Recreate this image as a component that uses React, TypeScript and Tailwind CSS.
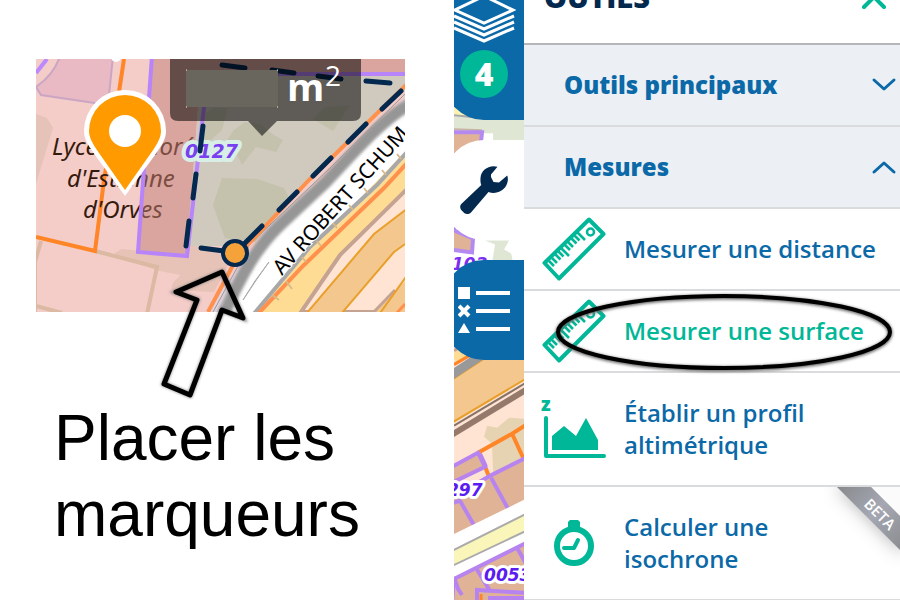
import React from "react";

const MAP_LABEL = "font-['DejaVu_Sans',sans-serif] font-bold italic";

function ParcelMap() {
  return (
    <svg viewBox="36 59 369 341" className="block w-[369px] max-w-full" role="img" aria-label="Carte">
      <defs>
        <clipPath id="mapFrame">
          <rect x="36" y="59" width="369" height="253" />
        </clipPath>
        <filter id="soft" x="-20%" y="-20%" width="140%" height="140%">
          <feGaussianBlur stdDeviation="1.5" />
        </filter>
      </defs>
      <g clipPath="url(#mapFrame)">
        <rect x="36" y="59" width="369" height="253" fill="#f4ccc8" />
        <path d="M60 56H113L108 105 88 102 41 95 36 87C46 80 56 69 60 56Z" fill="#e9bac3" stroke="#cba6c4" strokeWidth="2" />
        <path d="M36 73 47 59" stroke="#bb88ff" strokeWidth="4" />
        <path d="M36 114 47 118 53 128 36 184Z" fill="#e6c3b8" />
        <path d="M115 253 122 249 187 256 188 244 236 250 214 292 172 290C170 281 179 279 180 275L160 271 115 257Z" fill="#e7c3b7" />
        <path d="M41 241 35 262V314M95 251 157 267 147 314M36 306 62 313" fill="none" stroke="#dbb9a2" strokeWidth="4" />
        <path d="M124 59 119 92 104 180 95 251 36 237" fill="none" stroke="#ff8526" strokeWidth="4" />
        <circle cx="116" cy="57" r="5" fill="#fff" />

        <g className="font-['Noto_Sans',sans-serif] italic" fontSize="24" fill="#351a0c">
          <text x="52" y="155">Lycée Honoré</text>
          <text x="67" y="187">d'Estienne</text>
          <text x="83" y="218">d'Orves</text>
        </g>

        <path d="M152 59H405V75L280 75 203 85 198 107 187 256 138 252Z" fill="#c27e76" fillOpacity=".5" />
        <path d="M199 98 210 76H405V90L236 246 187 246Z" fill="#d0c9be" />
        <path d="M245 122 234 130 220 150 238 156 242 165 256 147 276 152 283 140 274 135 260 124ZM222 178 257 179 284 188 290 199 255 242 225 238 213 205ZM202 115 215 107 228 108 222 130 202 148ZM313 119 325 107 350 105 333 131Z" fill="#c4c2ad" />
        <path d="M405 74H280L222 84 204 107 187 256 138 252 152 56" fill="none" stroke="#b784fa" strokeWidth="4" />

        <path d="M405 98 345 158 270 226 205 312H405Z" fill="#e3d3dd" />
        <path d="M408 98 300 206C270 232 240 270 216 316H300L408 170Z" fill="#fff" />
        <path d="M405 94 330 168 250 244 213 312" fill="none" stroke="#999" strokeWidth="1" />
        <path d="M410 104C378 122 345 163 324 184L280 225C258 246 243 271 222 318" fill="none" stroke="#969696" strokeWidth="12" filter="url(#soft)" />
        <path d="M269 262 255 281 243 300 257 279Z" fill="#e0bfe0" stroke="#aaa" />
        <path d="M408 83 310 179 239 254 208 312" fill="none" stroke="#ff914d" strokeWidth="4" />

        <path d="M257 312 310 250 408 149V312Z" fill="#ffdc94" />
        <path d="M408 151 377 185 310 247 252 316" fill="none" stroke="#a8a8a8" strokeWidth="4" />
        <path d="M408 162 384 188 303 266 256 316" fill="none" stroke="#ff914d" strokeWidth="4" />
        <path d="M408 188 340 255 301 312H408Z" fill="#ffe4d4" stroke="#c4a392" strokeWidth="4" />
        <path d="M408 208 374 234 306 314H341L394 252 408 242Z" fill="#f4c78e" stroke="#e8a02a" strokeWidth="2" />
        <path d="M408 278 372 316H408Z" fill="#f4c78e" />
        <path d="M395 290 370 316" fill="none" stroke="#c4a392" strokeWidth="3" />
        <path d="M408 274 378 316" fill="none" stroke="#e8a02a" strokeWidth="2" />
        <path d="M405 304 396 314" fill="none" stroke="#ff914d" strokeWidth="3" />
        <path d="M286 281 292 289M302 257 306 262M317 241 321 246M333 223 337 228M349 205 353 210M364 188 368 193M382 170 386 175M397 154 401 159M272 295 279 300" stroke="#d8b98a" strokeWidth="2" />
        <text
          transform="translate(282 276) rotate(-48)"
          className="font-['Noto_Sans',sans-serif]"
          fontSize="21"
          fill="#000"
          stroke="#fff"
          strokeWidth="2"
          paintOrder="stroke"
        >
          AV ROBERT SCHUM
        </text>

        <text x="185" y="158" className={MAP_LABEL} fontSize="19" fill="#7a3ff0" stroke="#d8efe6" strokeWidth="8" strokeLinejoin="round" paintOrder="stroke">
          0127
        </text>

        <path
          d="M222 65 245 68M272 70 294 73M318 76 341 79M366 81 390 83M401 91 382 109M366 124 348 142M331 158 313 176M297 192 279 210M262 226 242 246M203 126 200 151M196 174 193 198M189 221 186 246M201 248 224 251"
          stroke="#04294f"
          strokeWidth="5"
          strokeLinecap="round"
        />
        <circle cx="235" cy="253" r="12" fill="#f5a23a" stroke="#04294f" strokeWidth="4" />

        <path d="M170 59H361V113Q361 121 353 121H277L262 136 248 121H178Q170 121 170 113Z" fill="#000" fillOpacity=".54" />
        <rect x="186" y="70" width="92" height="37" fill="#69665e" />
        <path d="M186 70h1M277 70h1M186 107h1M277 107h1" stroke="#eee" />
        <text x="287" y="101" className="font-['Open_Sans',sans-serif] font-bold" fontSize="38" fill="#fff">
          m
        </text>
        <text x="325" y="86" className="font-['Open_Sans',sans-serif]" fontSize="28" fill="#fff">
          2
        </text>

        <path d="M125 196 95 155C87 144 84 138 84 131A41 41 0 0 1 166 131C166 138 163 144 155 155Z" fill="#fff" />
        <path d="M125 190 99 153C92 143 89 137 89 131A36 36 0 0 1 161 131C161 137 158 143 151 153Z" fill="#ff9b00" />
        <circle cx="125" cy="131" r="16" fill="#fff" />
      </g>
      <path d="M222 272 176 292 197 300 164 384 190 395 222 310 243 318Z" fill="none" stroke="#777" strokeWidth="5" filter="url(#soft)" />
      <path d="M222 272 176 292 197 300 164 384 190 395 222 310 243 318Z" fill="none" stroke="#000" strokeWidth="5" strokeLinejoin="round" />
    </svg>
  );
}

function StripMap() {
  return (
    <svg viewBox="454 0 70 600" preserveAspectRatio="xMinYMin slice" className="absolute inset-0 h-full w-full" aria-hidden="true">
      <rect x="454" width="70" height="600" fill="#fff" />
      <path d="M454 100H524V142H493V133H454Z" fill="#dfe7d4" />
      <path d="M454 100H470L490 120 454 114Z" fill="#faf3b4" />
      <path d="M454 115 484 118" stroke="#a9a9a9" strokeWidth="2" />
      <path d="M454 129 482 130" stroke="#c9b3a4" strokeWidth="2" />
      <path d="M450 132 482 132 480 150 454 160V230L473 238 472 252 450 249Z" fill="#e0b397" stroke="#b58af0" strokeWidth="4" />
      <path d="M485 240H509L504 249 511 253 513 262H492L495 244Z" fill="#dfe7d4" />
      <text x="452" y="270" className={MAP_LABEL} fontSize="17" fill="#7d2cf2" stroke="#fff" strokeWidth="5" paintOrder="stroke">
        103
      </text>

      <path d="M454 330H524V480L454 520Z" fill="#ffe4d4" />
      <path d="M454 358 478 344" stroke="#ffdc94" strokeWidth="10" />
      <path d="M454 350 470 341" stroke="#c9a08a" strokeWidth="3" />
      <path d="M452 379 496 350H526V378L452 422Z" fill="#f4c78e" stroke="#e8a02a" strokeWidth="2" />
      <path d="M452 374 484 353" stroke="#999" strokeWidth="9" />
      <path d="M454 364 476 351" stroke="#ff8526" strokeWidth="3" />
      <path d="M454 425 526 382" stroke="#867268" strokeWidth="2" />
      <path d="M452 434 526 389" stroke="#957a6b" strokeWidth="6" />
      <path d="M487 425 497 427 509 417 524 418V460L493 472 492 443 484 436Z" fill="#e6d3b1" />
      <path d="M478 452 512 433 526 424M512 433 523 457M485 466 489 476" fill="none" stroke="#ff8526" strokeWidth="4" />
      <path d="M452 466 478 452 485 466 452 482ZM452 497 490 475 526 457V502L452 538Z" fill="#e0b397" stroke="#b784ef" strokeWidth="4" />
      <path d="M480 453 486 466M491 477 508 508M460 500 475 526M454 502 461 499" fill="none" stroke="#b784ef" strokeWidth="4" />
      <path d="M452 534 526 498V546L452 576Z" fill="#fff" />
      <path d="M452 550 526 513V530L452 565Z" fill="#faf5b8" stroke="#aaa" strokeWidth="2" />
      <path d="M454 578 526 542V602H452Z" fill="#e0b397" stroke="#b784ef" strokeWidth="4" />
      <path d="M476 567 490 590M517 547 526 563M454 576 458 588 462 594" fill="none" stroke="#b784ef" strokeWidth="4" />
      <path d="M477 602V589L526 592M490 602V597H526M504 602V598" fill="none" stroke="#b784ef" strokeWidth="4" />
      <path d="M481 593V602" stroke="#ff8526" strokeWidth="3" />
      <g className={MAP_LABEL} fontSize="17" fill="#5a1cf0" stroke="#fff" strokeWidth="6" strokeLinejoin="round" paintOrder="stroke">
        <text x="447" y="495">297</text>
        <text x="484" y="580">0053</text>
      </g>
    </svg>
  );
}

function LayersIcon() {
  return (
    <svg viewBox="452 -4 64 48" className="h-[48px] w-[64px]" fill="none" stroke="#fff" strokeWidth="3" aria-hidden="true">
      <path d="M484 -4 513 10 484 23 455 10ZM454 16 484 29 514 16M454 22 484 35 514 22M454 28 484 41 514 28" />
    </svg>
  );
}

function WrenchIcon() {
  return (
    <svg viewBox="0 0 48 48" className="size-12" fill="#04294f" aria-hidden="true">
      <path d="M37.500 .8C29 -1.500 21 4 20.500 12C20.300 15 20.500 17 21.300 19L1.800 37.500C-.3 39.500 -.2 42 1.200 44L4.500 47.200C7 48.500 9.500 48.300 11 46.500L28.500 26C34 28.200 41 26.500 45 21.500C48 17.500 48.500 13 47.200 9.500L39 16.500L33.500 16L31 11L31 8.500Z" />
    </svg>
  );
}

function LegendIcon() {
  return (
    <svg viewBox="0 0 52 46" className="h-[46px] w-[52px]" fill="#fff" aria-hidden="true">
      <path d="M0 0H12V12H0ZM0 46 6 36 12 46ZM18 4H52V8H18ZM18 22H52V26H18ZM18 40H52V44H18Z" />
      <path d="M1 19 11 29M11 19 1 29" stroke="#fff" strokeWidth="4" />
    </svg>
  );
}

function RulerIcon() {
  return (
    <svg viewBox="542 218 64 64" className="size-16" fill="none" stroke="#00b798" aria-hidden="true">
      <path d="M589 220.500 603.500 235 559 279.500 544.500 264Z" strokeWidth="4" strokeLinejoin="round" />
      <circle cx="590.500" cy="233" r="3.500" strokeWidth="2.500" />
      <path
        d="M549 262 554 267M552 259 557 264M555.500 255.500 560.500 260.500M558.500 252.500 563.500 257.500M561.500 249.500 569 257M565 246 570 251M568 243 573 248M571.500 239.500 576.500 244.500M574.500 236.500 579.500 241.500M577.500 233.500 585 241"
        strokeWidth="2.600"
      />
    </svg>
  );
}

function ProfileIcon() {
  return (
    <svg viewBox="542 398 64 62" className="h-[62px] w-16 overflow-visible" aria-hidden="true">
      <text x="541" y="411" className="font-['Open_Sans',sans-serif] font-extrabold" fontSize="19" fill="#00b798">
        z
      </text>
      <path d="M546 418V456H604" fill="none" stroke="#00b798" strokeWidth="4" strokeLinecap="round" strokeLinejoin="round" />
      <path d="M552 450V436L564 426 576 436 586 418 598 440V450Z" fill="#00b798" />
    </svg>
  );
}

function StopwatchIcon() {
  return (
    <svg viewBox="554 520 40 46" className="h-[46px] w-10" fill="none" stroke="#00b798" aria-hidden="true">
      <circle cx="574" cy="546" r="17" strokeWidth="6" />
      <path d="M570 520H578L580 522V528H568V522Z" fill="#00b798" stroke="none" />
      <path d="M564 548H574L578 540" strokeWidth="4" strokeLinecap="round" strokeLinejoin="round" />
    </svg>
  );
}

function Chevron({ up = false }: { up?: boolean }) {
  return (
    <svg viewBox="0 0 22 12" className="h-3 w-[22px] shrink-0 overflow-visible" fill="none" stroke="#0c69a8" strokeWidth="3" strokeLinecap="round" strokeLinejoin="round" aria-hidden="true">
      <path d={up ? "M1 11 11 2 21 11" : "M1 1 11 10 21 1"} />
    </svg>
  );
}

function SectionHeader({ label, open = false }: { label: string; open?: boolean }) {
  return (
    <button
      type="button"
      aria-expanded={open}
      className="flex w-full items-center justify-between border-b-2 border-[#dadbdc] bg-[#ecf0f4] py-6 pr-[5px] pl-10 text-left text-2xl leading-8 font-extrabold"
    >
      {label}
      <Chevron up={open} />
    </button>
  );
}

function Tool({
  icon,
  active = false,
  children,
  overlay,
}: {
  icon: React.ReactNode;
  active?: boolean;
  children: React.ReactNode;
  overlay?: React.ReactNode;
}) {
  return (
    <li className="relative border-b-2 border-[#dadbdc]">
      <button type="button" className="flex w-full items-center py-6 text-left text-2xl leading-8 font-semibold">
        <span className="-my-4 flex w-[100px] shrink-0 justify-center">{icon}</span>
        <span className={active ? "text-[#00b798]" : ""}>{children}</span>
      </button>
      {overlay}
    </li>
  );
}

function BetaRibbon() {
  return (
    <svg viewBox="824 487 76 80" className="pointer-events-none absolute top-0 right-0 h-20 w-[76px]">
      <defs>
        <linearGradient id="ribbon" x1="0" y1="0" x2="1" y2="1">
          <stop offset="0" stopColor="#88898d" />
          <stop offset=".5" stopColor="#a5a8b3" />
          <stop offset="1" stopColor="#8c8d91" />
        </linearGradient>
        <filter id="ribbonShadow" x="-50%" y="-50%" width="200%" height="200%">
          <feGaussianBlur stdDeviation="9" />
        </filter>
      </defs>
      <path d="M835 485 875 485 905 520V555Z" fill="#000" fillOpacity=".3" filter="url(#ribbonShadow)" />
      <path d="M871 487H900V516Z" fill="#fbfbfb" />
      <path d="M837 487H871L900 516V550Z" fill="url(#ribbon)" />
      <text transform="translate(863 505) rotate(45)" className="font-['Open_Sans',sans-serif] font-semibold" fontSize="15" fill="#fff">
        BETA
      </text>
    </svg>
  );
}

function SelectionRing() {
  return (
    <svg viewBox="554 291 342 80" className="pointer-events-none absolute top-0 right-1 h-20 w-[342px] overflow-visible" fill="none" aria-hidden="true">
      <defs>
        <filter id="ringShadow" x="-5%" y="-10%" width="110%" height="120%">
          <feGaussianBlur stdDeviation="1.500" />
        </filter>
      </defs>
      <ellipse cx="724" cy="333" rx="166" ry="36" stroke="#666" strokeWidth="5" filter="url(#ringShadow)" />
      <ellipse cx="724" cy="332" rx="166" ry="36" stroke="#000" strokeWidth="4" />
    </svg>
  );
}

export default function App() {
  return (
    <main className="flex min-h-screen overflow-hidden bg-white font-['Open_Sans',sans-serif]">
      <figure className="min-w-0 flex-1 pt-[59px] pl-9">
        <ParcelMap />
        <figcaption className="pl-[18px] font-['Liberation_Sans',Arial,sans-serif] text-[64px] leading-[76px] text-black">
          Placer les
          <br />
          marqueurs
        </figcaption>
      </figure>

      <nav aria-label="Panneaux" className="relative w-[70px] shrink-0 overflow-hidden">
        <StripMap />
        <div className="relative -ml-[10px] flex w-20 flex-col gap-5">
          <button type="button" aria-label="Couches" className="flex h-[120px] flex-col items-center gap-[6px] rounded-bl-[40px] bg-[#0c69a8]">
            <span className="-mt-1">
              <LayersIcon />
            </span>
            <span className="flex size-12 items-center justify-center rounded-full bg-[#00b798] text-[32px] leading-none font-extrabold text-white">
              4
            </span>
          </button>
          <button type="button" aria-label="Outils" className="flex h-[100px] items-center justify-center rounded-l-[40px] bg-white">
            <WrenchIcon />
          </button>
          <button type="button" aria-label="Légende" className="flex h-[100px] items-center justify-center rounded-l-[40px] bg-[#0c69a8]">
            <LegendIcon />
          </button>
        </div>
      </nav>

      <aside className="w-[376px] shrink-0 bg-white text-[#0c69a8]">
        <header className="flex h-[45px] items-start justify-between border-b-2 border-[#b5b6b7] pr-[14px] pl-5">
          <h2 className="-mt-[21px] text-[29px] leading-9 font-extrabold text-[#04294f]">OUTILS</h2>
          <button type="button" aria-label="Fermer" className="-mt-4">
            <svg viewBox="0 0 24 26" className="h-[26px] w-6" fill="none" stroke="#00b798" strokeWidth="4" strokeLinecap="round" aria-hidden="true">
              <path d="M2 3 22 23M22 3 2 23" />
            </svg>
          </button>
        </header>
        <SectionHeader label="Outils principaux" />
        <SectionHeader label="Mesures" open />
        <ul>
          <Tool icon={<RulerIcon />}>Mesurer une distance</Tool>
          <Tool icon={<RulerIcon />} active overlay={<SelectionRing />}>
            Mesurer une surface
          </Tool>
          <Tool icon={<ProfileIcon />}>
            Établir un profil
            <br />
            altimétrique
          </Tool>
          <Tool icon={<StopwatchIcon />} overlay={<BetaRibbon />}>
            Calculer une
            <br />
            isochrone
          </Tool>
        </ul>
      </aside>
    </main>
  );
}
